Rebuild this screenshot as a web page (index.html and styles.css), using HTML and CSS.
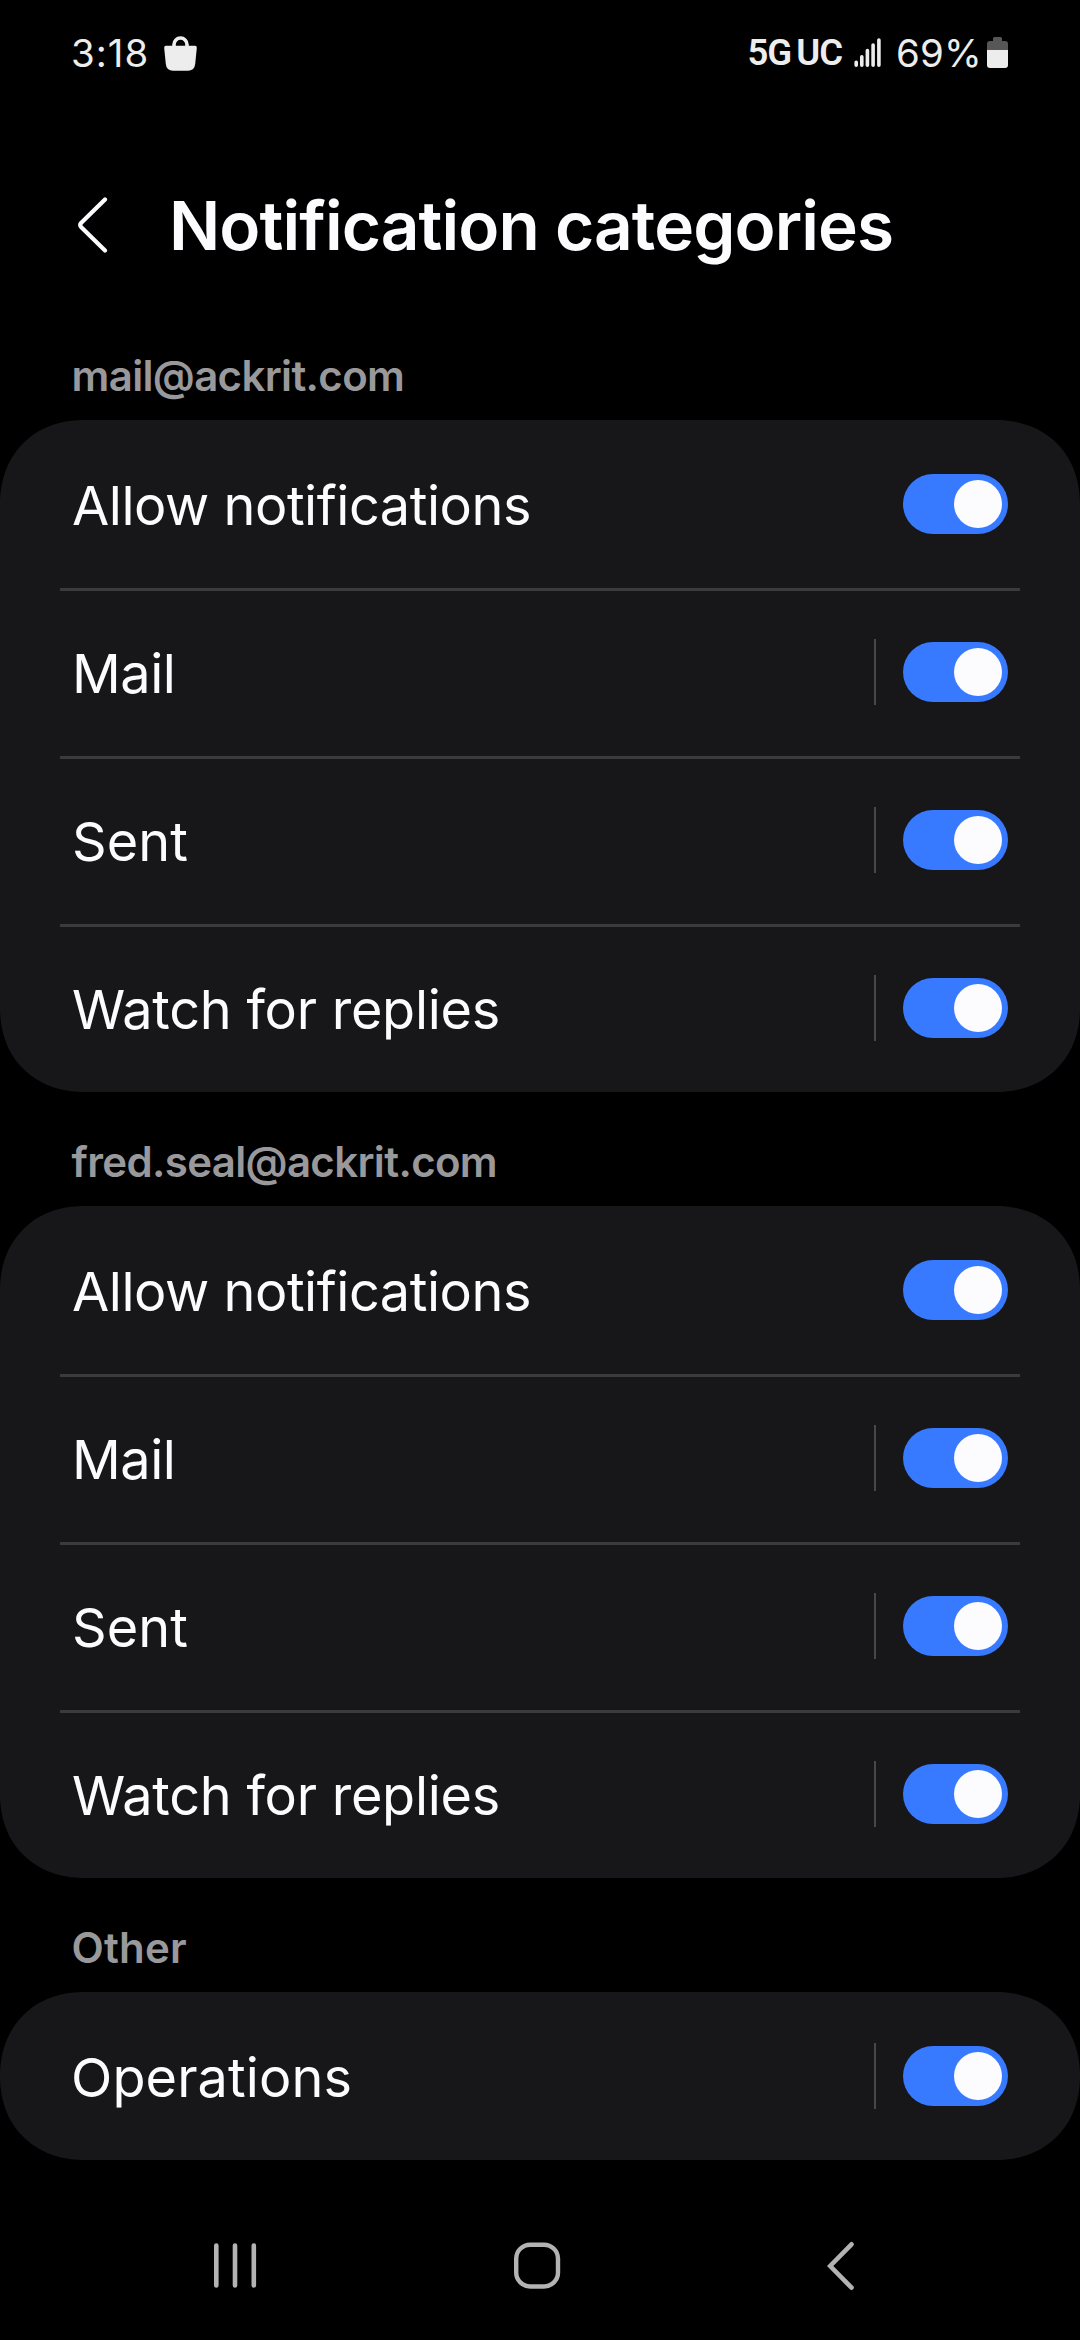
FILE: index.html
```html
<!DOCTYPE html>
<html lang="en">
<head>
<meta charset="utf-8">
<title>Notification categories</title>
<link rel="stylesheet" href="styles.css">
</head>
<body>
<div class="status-bar">
  <span class="clock">3:18</span>
  <svg class="bag" width="33" height="35" viewBox="0 0 33 35">
    <path d="M10 12V8.500A6.500 6.500 0 0 1 23 8.500V12" fill="none" stroke="#ededed" stroke-width="3.600"/>
    <path d="M2 9.800H31Q33 9.800 32.800 12L31.200 28Q30.500 34.700 24 34.700H9Q2.500 34.700 1.800 28L.2 12Q0 9.800 2 9.800Z" fill="#ededed"/>
  </svg>
  <span class="spacer"></span>
  <span class="network"><span>5G</span><span>UC</span></span>
  <svg class="signal" width="28" height="30" viewBox="0 0 28 30" stroke="#ededed" stroke-width="3.600" stroke-linecap="round">
    <path d="M2.200 24.300V27.200M7.800 18.800V27.200M13.400 12.600V27.200M19.100 7V27.200M24.900 2V27.200"/>
  </svg>
  <span class="percent">69%</span>
  <svg class="battery" width="21" height="31" viewBox="0 0 21 31">
    <path d="M7.500 0H13.500Q15 0 15 1.500V4H18Q21 4 21 7V13.500H0V7Q0 4 3 4H6V1.500Q6 0 7.500 0Z" fill="#575757"/>
    <path d="M0 13H21V28Q21 31 18 31H3Q0 31 0 28Z" fill="#ededed"/>
  </svg>
</div>

<header class="header">
  <svg width="30" height="56" viewBox="0 0 30 56" fill="none" stroke="#fcfcff" stroke-width="4.200" stroke-linecap="round" stroke-linejoin="round">
    <path d="M27 2.500L3.300 25.800Q1.200 28 3.300 30.200L27 53.500"/>
  </svg>
  <h1 class="title">Notification categories</h1>
</header>

<main>
  <h2 class="label">mail@ackrit.com</h2>
  <section class="card">
    <div class="row"><span class="name">Allow notifications</span><span class="toggle"></span></div>
    <div class="row"><span class="name">Mail</span><span class="bar"></span><span class="toggle"></span></div>
    <div class="row"><span class="name sent">Sent</span><span class="bar"></span><span class="toggle"></span></div>
    <div class="row"><span class="name watch">Watch for replies</span><span class="bar"></span><span class="toggle"></span></div>
  </section>
  <h2 class="label">fred.seal@ackrit.com</h2>
  <section class="card">
    <div class="row"><span class="name">Allow notifications</span><span class="toggle"></span></div>
    <div class="row"><span class="name">Mail</span><span class="bar"></span><span class="toggle"></span></div>
    <div class="row"><span class="name sent">Sent</span><span class="bar"></span><span class="toggle"></span></div>
    <div class="row"><span class="name watch">Watch for replies</span><span class="bar"></span><span class="toggle"></span></div>
  </section>
  <h2 class="label other">Other</h2>
  <section class="card">
    <div class="row"><span class="name operations">Operations</span><span class="bar"></span><span class="toggle"></span></div>
  </section>
</main>

<nav class="nav">
  <svg width="44" height="48" viewBox="0 0 44 48" stroke="#b3b3b3" stroke-width="4.600" stroke-linecap="round">
    <path d="M3.300 3.500V43.500M22 3.500V43.500M40.800 3.500V43.500"/>
  </svg>
  <svg class="home" width="48" height="48" viewBox="0 0 48 48" fill="none" stroke="#b3b3b3" stroke-width="4.400">
    <rect x="3.200" y="2.700" width="41.800" height="41.800" rx="14"/>
  </svg>
  <svg width="28" height="50" viewBox="0 0 28 50" fill="none" stroke="#b3b3b3" stroke-width="4.600" stroke-linecap="round">
    <path d="M24.500 3.300L3.200 25L24.500 46.700"/>
  </svg>
</nav>
</body>
</html>
```
FILE: styles.css
```css
* { box-sizing: border-box; }

body {
  margin: 0;
  width: 1080px;
  height: 2340px;
  overflow: hidden;
  background: #000;
  color: #fcfcff;
  font-family: Inter, sans-serif;
}

svg { display: block; flex: none; }

.status-bar {
  display: flex;
  align-items: center;
  height: 106px;
  padding: 0 72px 0 71px;
  color: #ededed;
  font-size: 38.400px;
  line-height: 46px;
  white-space: nowrap;
}

.clock { width: 93px; letter-spacing: 1px; }
.spacer { flex: 1; }

.network {
  display: flex;
  gap: 5px;
  margin-right: 12px;
  font-family: Roboto, sans-serif;
  font-size: 36.500px;
  font-weight: 600;
  letter-spacing: -1px;
}

.percent { width: 91px; margin-left: 14px; letter-spacing: .2px; }
.battery { margin-top: -1px; }

.header {
  display: flex;
  align-items: center;
  gap: 61px;
  height: 200px;
  padding: 39px 0 0 78px;
}

.header svg { margin-top: -2px; }

.title {
  margin: 0;
  font-size: 67.500px;
  font-weight: 600;
  line-height: 80px;
  letter-spacing: -.91px;
}

.header + main { margin-top: 0; }

.label {
  height: 114px;
  margin: 0;
  padding: 45px 0 0 71.500px;
  color: #99999c;
  font-size: 42px;
  font-weight: 600;
  line-height: 50px;
  letter-spacing: -.65px;
}

.other { letter-spacing: .2px; }

.card {
  border-radius: 84px;
  corner-shape: superellipse(1.1);
  background: #17171a;
}

.row {
  display: flex;
  align-items: center;
  height: 168px;
  margin: 0 60px;
  padding: 0 12px;
}

.row + .row {
  padding-bottom: 3px;
  border-top: 3px solid #3b3b3d;
}

.name {
  flex: 1;
  padding-top: 3px;
  font-size: 54px;
  line-height: 66px;
  letter-spacing: -.45px;
}

.sent { letter-spacing: .1px; }
.watch { letter-spacing: -.25px; }
.operations { margin-left: -1px; letter-spacing: .1px; }

.bar {
  width: 2px;
  height: 66px;
  margin-right: 27px;
  background: #48484a;
}

.toggle {
  width: 105px;
  height: 60px;
  padding: 6px;
  border-radius: 30px;
  background: #387aff;
}

.toggle::before {
  content: "";
  display: block;
  width: 48px;
  height: 48px;
  margin-left: auto;
  border-radius: 50%;
  background: #fcfcff;
}

.nav {
  display: flex;
  align-items: center;
  height: 180px;
  padding: 32px 0 0 213px;
}

.home { margin: 0 266px 0 256px; }
```
